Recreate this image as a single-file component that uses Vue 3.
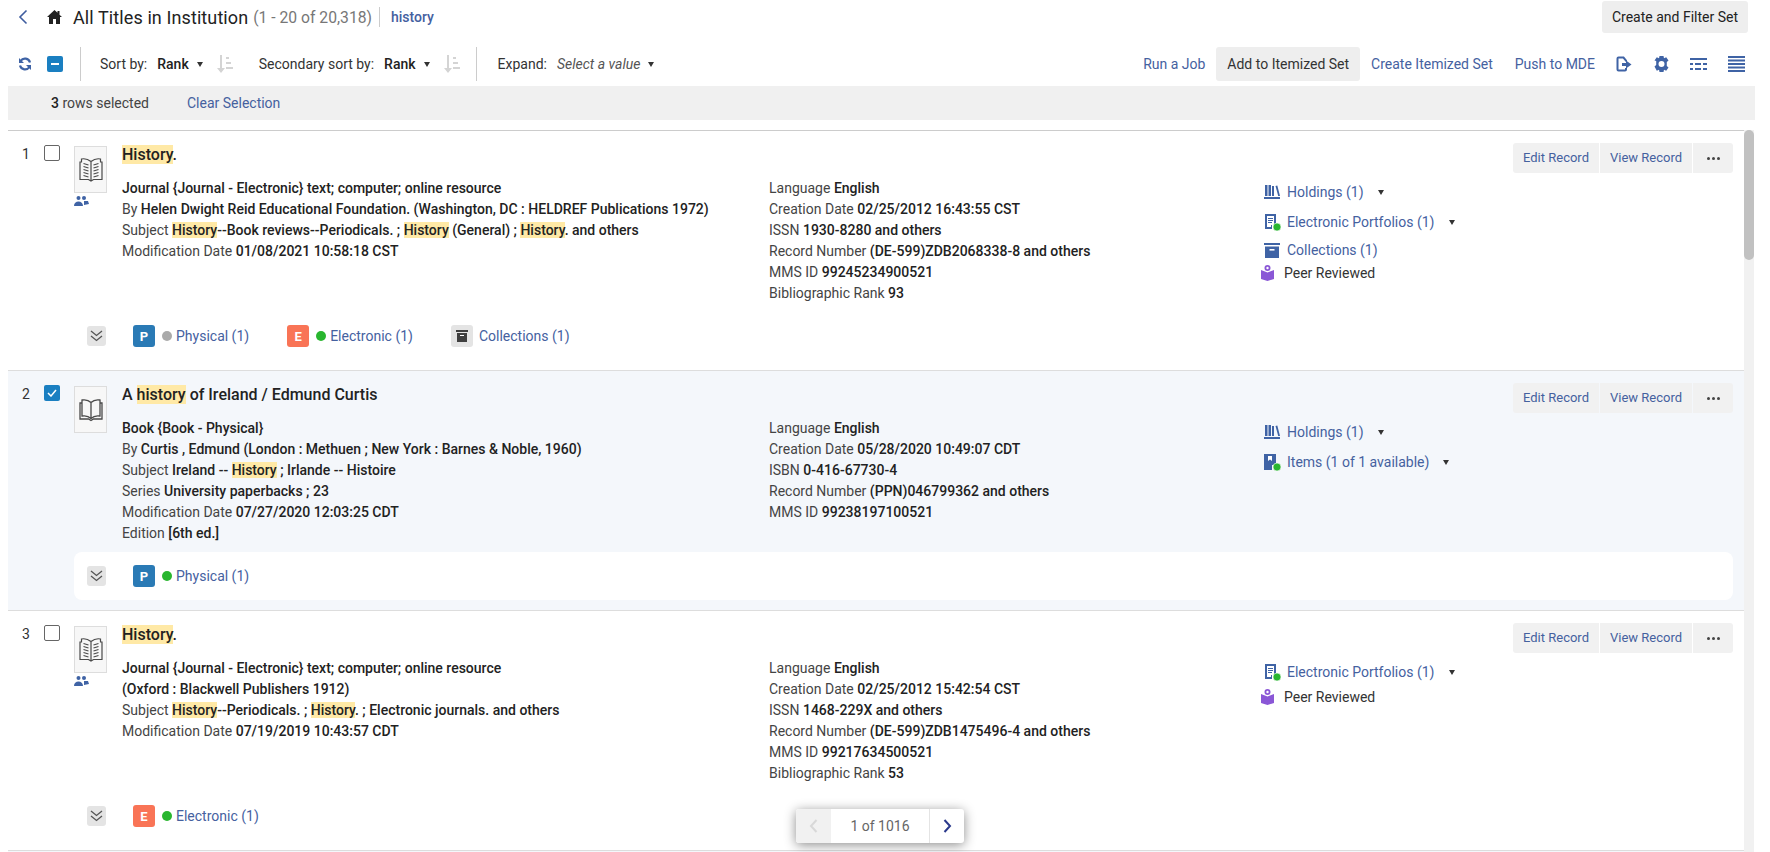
<template>
    <div class="page">
        <div class="top">
            <svg class="back" width="10" height="16" viewBox="0 0 10 16"><path d="M8.5 1.5 2 8l6.5 6.5" fill="none" stroke="#3f5d9f" stroke-width="1.6"/></svg>
            <svg class="home" width="15" height="14" viewBox="0 0 15 14"><path d="M7.5 0 0 7h2v7h4V9h3v5h4V7h2l-2.500-2.300V1h-2v1.800z" fill="#222"/></svg>
            <span class="page-title">All Titles in Institution</span>
            <span class="count">(1 - 20 of 20,318)</span>
            <span class="query">history</span>
            <button class="filter-btn">Create and Filter Set</button>
        </div>

        <div class="toolbar">
            <svg class="refresh" width="14" height="14" viewBox="0 0 14 14">
                <path d="M12 5.500A5.200 5.200 0 0 0 2.600 4M2 8.500A5.200 5.200 0 0 0 11.400 10" fill="none" stroke="#3f63a5" stroke-width="2.200"/>
                <path d="M1 1v5h5zM13 13V8H8z" fill="#3f63a5"/>
            </svg>
            <span class="select-all"><i></i></span>
            <span class="vsep first"></span>
            <span class="lbl">Sort by:</span>
            <b class="val">Rank</b>
            <i class="caret"></i>
            <svg class="sort" width="17" height="18" viewBox="0 0 17 18"><path d="M4 0h2v13h3l-4 5-4-5h3zM10 2h3v2h-3zM10 7h5v2h-5zM10 12h7v2h-7z" fill="#d4d4d4"/></svg>
            <span class="lbl second">Secondary sort by:</span>
            <b class="val">Rank</b>
            <i class="caret"></i>
            <svg class="sort" width="17" height="18" viewBox="0 0 17 18"><path d="M4 0h2v13h3l-4 5-4-5h3zM10 2h3v2h-3zM10 7h5v2h-5zM10 12h7v2h-7z" fill="#d4d4d4"/></svg>
            <span class="vsep"></span>
            <span class="lbl">Expand:</span>
            <em class="placeholder">Select a value</em>
            <i class="caret"></i>

            <div class="tools">
                <a class="tool">Run a Job</a>
                <a class="tool active">Add to Itemized Set</a>
                <a class="tool">Create Itemized Set</a>
                <a class="tool">Push to MDE</a>
                <svg class="tool-ic" width="17" height="16" viewBox="0 0 17 16">
                    <path d="M10 5.500V4.500L7.500 1.500H2.500c-.6 0-1 .4-1 1v11c0 .6.4 1 1 1H9c.6 0 1-.4 1-1v-1.500" fill="none" stroke="#3f63a5" stroke-width="2"/>
                    <path d="M6 7h4V4.500L15.500 8.500 10 12.500V10H6z" fill="#3f63a5"/>
                </svg>
                <svg class="tool-ic" width="15" height="16" viewBox="0 0 15 16"><path d="M5.500 0h4l.5 2.200 2.200-.9 2.300 3.200-1.700 1.600v3.800l1.700 1.600-2.300 3.200-2.200-.9-.5 2.200h-4l-.5-2.200-2.200.9L.5 10.500l1.700-1.600V5.100L.5 4.500 2.800 1.300 5 2.200zM7.500 5a3 3 0 1 0 0 6 3 3 0 0 0 0-6z" fill="#3f63a5"/></svg>
                <svg class="tool-ic" width="17" height="12" viewBox="0 0 17 12"><path d="M0 0h17v2H0zM0 5h3v2H0zM5 5h6v2H5zM13 5h4v2h-4zM0 10h3v2H0zM5 10h6v2H5zM13 10h4v2h-4z" fill="#3f63a5"/></svg>
                <svg class="tool-ic" width="17" height="16" viewBox="0 0 17 16"><path d="M0 0h17v2H0zM0 3.500h17v2H0zM0 7h17v2H0zM0 10.500h17v2H0zM0 14h17v2H0z" fill="#3f63a5"/></svg>
            </div>
        </div>

        <div class="selection">
            <span class="sel-count"><b>3</b> rows selected</span>
            <a class="clear">Clear Selection</a>
        </div>

        <div class="list">
            <div class="rows">
                <div class="row" v-for="rec in records" :key="rec.num" :class="{ selected: rec.checked }">
                    <span class="num">{{ rec.num }}</span>
                    <span class="check" :class="{ on: rec.checked }">
                        <svg v-if="rec.checked" width="10" height="8" viewBox="0 0 10 8"><path d="M1 4l3 3 5-6" fill="none" stroke="#fff" stroke-width="1.500"/></svg>
                    </span>

                    <div class="body">
                        <div class="body-top">
                            <div class="thumb-col">
                                <div class="thumb">
                                    <svg v-if="rec.type === 'journal'" width="24" height="26" viewBox="0 0 24 26" fill="none" stroke="#4a4a4a" stroke-width="1.200">
                                        <path d="M12 4.500C9.500 2.500 5 1.500 2.500 2v3H1v17.500h8.500L12 24l2.500-1.500H23V5h-1.500V2C19 1.500 14.500 2.500 12 4.500zM12 4.500V24"/>
                                        <path d="M4.500 6.500l5 1.500M4.500 9.500l5 1.500M4.500 12.500l5 1.500M4.500 15.500l5 1.500M4.500 18.500l5 1.500M14.500 8l5-1.500M14.500 11l5-1.500M14.500 14l5-1.500M14.500 17l5-1.500M14.500 20l5-1.500"/>
                                    </svg>
                                    <svg v-else width="24" height="24" viewBox="0 0 24 24" fill="none" stroke="#4a4a4a" stroke-width="1.300">
                                        <path d="M12 4.500C10 2.500 6 1.500 3 2v16c3-.5 7 .5 9 2.500 2-2 6-3 9-2.500V2C18 1.500 14 2.500 12 4.500zM12 4.500v16"/>
                                        <path d="M3 5H1v16h8.500l2.500 1.500 2.500-1.500H23V5h-2"/>
                                    </svg>
                                </div>
                                <svg v-if="rec.type === 'journal'" class="people" width="15" height="12" viewBox="0 0 15 12">
                                    <circle cx="4.500" cy="2" r="2" fill="#3f63a5"/><circle cx="10" cy="2" r="2" fill="#3f63a5"/>
                                    <path d="M0 10c0-3 2-4.500 4.500-4.500S9 7 9 10zM10 5h4l1 3-5 1z" fill="#3f63a5"/>
                                </svg>
                            </div>

                            <div class="main">
                                <div class="title-row">
                                    <div class="title">
                                        <template v-for="(p, i) in parts(rec.title)" :key="i"><mark v-if="p.hit">{{ p.text }}</mark><template v-else>{{ p.text }}</template></template>
                                    </div>
                                    <div class="actions">
                                        <a class="act">Edit Record</a>
                                        <a class="act">View Record</a>
                                        <a class="act more"><i></i><i></i><i></i></a>
                                    </div>
                                </div>

                                <div class="cols">
                                    <div class="col left">
                                        <div class="line" v-for="(l, i) in rec.left" :key="i">
                                            <span v-if="l[0]" class="key">{{ l[0] }}</span>
                                            <span class="value"><template v-for="(p, j) in parts(l[1])" :key="j"><mark v-if="p.hit">{{ p.text }}</mark><template v-else>{{ p.text }}</template></template></span>
                                        </div>
                                    </div>
                                    <div class="col mid">
                                        <div class="line" v-for="(l, i) in rec.mid" :key="i">
                                            <span class="key">{{ l[0] }}</span><span class="value">{{ l[1] }}</span>
                                        </div>
                                    </div>
                                    <div class="col right">
                                        <div class="res" v-for="(r, i) in rec.res" :key="i" :class="r.kind">
                                            <span class="res-ic">
                                                <svg v-if="r.kind === 'holdings'" width="16" height="14" viewBox="0 0 16 14"><path d="M1 0h2.500v11H1zM4.500 0H7v11H4.500zM8 1h2v10H8zM11.500 1l1.800-.6L16 11h-1.800zM0 12h16v2H0z" fill="#3f63a5"/></svg>
                                                <svg v-else-if="r.kind === 'portfolio'" width="18" height="18" viewBox="0 0 18 18"><path d="M2 1h11v11H9v4H2z" fill="#3f63a5"/><path d="M4 3h7v9H8v2H4z" fill="#fff"/><path d="M5 5h5v1H5zM5 7h5v1H5zM5 9h4v1H5z" fill="#3f63a5"/><circle cx="14" cy="14" r="4" fill="#29b62f" stroke="#fff" stroke-width=".6"/></svg>
                                                <svg v-else-if="r.kind === 'items'" width="18" height="18" viewBox="0 0 18 18"><path d="M1 1h12v11H9v5H1z" fill="#3f63a5"/><path d="M5 3h4v5L7 6.500 5 8z" fill="#fff"/><circle cx="14" cy="14" r="4" fill="#29b62f" stroke="#fff" stroke-width=".6"/></svg>
                                                <svg v-else-if="r.kind === 'collections'" width="16" height="15" viewBox="0 0 16 15"><path d="M0 0h16v2H0zM1 3.500h14V15H1z" fill="#3f63a5"/><path d="M5.500 6h5v1.600h-5z" fill="#fff"/></svg>
                                                <svg v-else width="13" height="16" viewBox="0 0 13 16"><circle cx="6.500" cy="3" r="3" fill="#8a57d6"/><circle cx="6.500" cy="3" r="1.200" fill="#fff"/><path d="M0 5l6.500 2.500L13 5v9l-6.500 2L0 14z" fill="#8a57d6"/></svg>
                                            </span>
                                            <a v-if="r.kind !== 'peer'" class="res-link">{{ r.text }}</a>
                                            <span v-else class="peer-text">{{ r.text }}</span>
                                            <i v-if="r.menu" class="caret"></i>
                                        </div>
                                    </div>
                                </div>
                            </div>
                        </div>

                        <div class="band">
                            <span class="expand">
                                <svg width="13" height="12" viewBox="0 0 13 12" fill="none" stroke="#555" stroke-width="1.300"><path d="M1 1l5.500 4.500L12 1M1 6l5.500 4.500L12 6"/></svg>
                            </span>
                            <div class="chip" v-for="(c, i) in rec.chips" :key="i">
                                <span class="badge" :class="c.kind">
                                    <template v-if="c.kind === 'p'">P</template>
                                    <template v-else-if="c.kind === 'e'">E</template>
                                    <svg v-else width="14" height="14" viewBox="0 0 14 14"><path d="M1 1h12v2H1zM2 4h10v9H2z" fill="#3f3f3f"/><path d="M5 6h4v1H5z" fill="#fff"/></svg>
                                </span>
                                <span v-if="c.dot" class="dot" :style="{ background: c.dot }"></span>
                                <a class="chip-link">{{ c.text }}</a>
                            </div>
                        </div>
                    </div>
                </div>
                <div class="row selected"></div>
            </div>
            <div class="scrollbar"><div class="thumb-bar"></div></div>
        </div>

        <div class="pager">
            <span class="pg prev"><svg width="9" height="14" viewBox="0 0 9 14"><path d="M7.500 1 2 7l5.500 6" fill="none" stroke="#d8d8d8" stroke-width="2"/></svg></span>
            <span class="pg-text">1 of 1016</span>
            <span class="pg next"><svg width="9" height="14" viewBox="0 0 9 14"><path d="M1.500 1 7 7l-5.500 6" fill="none" stroke="#2b3a8c" stroke-width="2"/></svg></span>
        </div>
    </div>
</template>

<script setup>
const parts = (text) => text.split(/(history)/i).filter(Boolean).map(t => ({
    text: t,
    hit: t.toLowerCase() === 'history'
}));

const records = [{
    num: 1,
    type: 'journal',
    checked: false,
    title: 'History.',
    left: [
        ['', 'Journal {Journal - Electronic} text; computer; online resource'],
        ['By', 'Helen Dwight Reid Educational Foundation. (Washington, DC : HELDREF Publications 1972)'],
        ['Subject', 'History--Book reviews--Periodicals. ; History (General) ; History. and others'],
        ['Modification Date', '01/08/2021 10:58:18 CST']
    ],
    mid: [
        ['Language', 'English'],
        ['Creation Date', '02/25/2012 16:43:55 CST'],
        ['ISSN', '1930-8280 and others'],
        ['Record Number', '(DE-599)ZDB2068338-8 and others'],
        ['MMS ID', '99245234900521'],
        ['Bibliographic Rank', '93']
    ],
    res: [
        { kind: 'holdings', text: 'Holdings (1)', menu: true },
        { kind: 'portfolio', text: 'Electronic Portfolios (1)', menu: true },
        { kind: 'collections', text: 'Collections (1)' },
        { kind: 'peer', text: 'Peer Reviewed' }
    ],
    chips: [
        { kind: 'p', dot: '#aaa', text: 'Physical (1)' },
        { kind: 'e', dot: '#29b62f', text: 'Electronic (1)' },
        { kind: 'c', text: 'Collections (1)' }
    ]
}, {
    num: 2,
    type: 'book',
    checked: true,
    title: 'A history of Ireland / Edmund Curtis',
    left: [
        ['', 'Book {Book - Physical}'],
        ['By', 'Curtis , Edmund (London : Methuen ; New York : Barnes & Noble, 1960)'],
        ['Subject', 'Ireland -- History ; Irlande -- Histoire'],
        ['Series', 'University paperbacks ; 23'],
        ['Modification Date', '07/27/2020 12:03:25 CDT'],
        ['Edition', '[6th ed.]']
    ],
    mid: [
        ['Language', 'English'],
        ['Creation Date', '05/28/2020 10:49:07 CDT'],
        ['ISBN', '0-416-67730-4'],
        ['Record Number', '(PPN)046799362 and others'],
        ['MMS ID', '99238197100521']
    ],
    res: [
        { kind: 'holdings', text: 'Holdings (1)', menu: true },
        { kind: 'items', text: 'Items (1 of 1 available)', menu: true }
    ],
    chips: [
        { kind: 'p', dot: '#29b62f', text: 'Physical (1)' }
    ]
}, {
    num: 3,
    type: 'journal',
    checked: false,
    title: 'History.',
    left: [
        ['', 'Journal {Journal - Electronic} text; computer; online resource'],
        ['', '(Oxford : Blackwell Publishers 1912)'],
        ['Subject', 'History--Periodicals. ; History. ; Electronic journals. and others'],
        ['Modification Date', '07/19/2019 10:43:57 CDT']
    ],
    mid: [
        ['Language', 'English'],
        ['Creation Date', '02/25/2012 15:42:54 CST'],
        ['ISSN', '1468-229X and others'],
        ['Record Number', '(DE-599)ZDB1475496-4 and others'],
        ['MMS ID', '99217634500521'],
        ['Bibliographic Rank', '53']
    ],
    res: [
        { kind: 'portfolio', text: 'Electronic Portfolios (1)', menu: true },
        { kind: 'peer', text: 'Peer Reviewed' }
    ],
    chips: [
        { kind: 'e', dot: '#29b62f', text: 'Electronic (1)' }
    ]
}];
</script>

<style>
html, body {
    margin: 0;
    background: #fff;
    overflow: hidden;
}
</style>

<style scoped>
.page {
    position: relative;
    width: 1770px;
    height: 852px;
    overflow: hidden;
    background: #fff;
    font-family: Roboto, "Liberation Sans", sans-serif;
    font-size: 14px;
    color: #333;
}

a {
    color: #45619f;
}

/* top title bar */
.top {
    display: flex;
    align-items: center;
    height: 32px;
    margin-top: 1px;
    padding: 0 22px 0 18px;
}

.home {
    margin-left: 19px;
}

.page-title {
    margin-left: 11px;
    font-size: 18px;
    letter-spacing: .1px;
    color: #222;
}

.count {
    margin-left: 5px;
    font-size: 15.700px;
    color: #777;
}

.query {
    margin-left: 7px;
    padding-left: 11px;
    line-height: 20px;
    border-left: 1px solid #ccc;
    color: #45619f;
    font-weight: 500;
}

.filter-btn {
    margin-left: auto;
    height: 32px;
    width: 146px;
    padding: 0;
    border: 0;
    border-radius: 3px;
    background: #eee;
    color: #222;
    font: 14px Roboto, sans-serif;
}

/* toolbar */
.toolbar {
    display: flex;
    align-items: center;
    height: 34px;
    margin-top: 14px;
    padding: 0 25px 0 18px;
}

.select-all {
    display: flex;
    align-items: center;
    justify-content: center;
    width: 16px;
    height: 16px;
    margin-left: 15px;
    border-radius: 2px;
    background: #1a7fc1;
}

.select-all i {
    width: 8px;
    height: 2px;
    background: #fff;
}

.vsep {
    width: 1px;
    height: 34px;
    margin: 0 21px 0 16px;
    background: #ccc;
}

.vsep.first {
    margin: 0 19px 0 17px;
}

.lbl {
    color: #333;
}

.lbl.second {
    margin-left: 26px;
}

.val {
    margin-left: 10px;
    font-weight: 500;
    color: #222;
}

.placeholder {
    margin-left: 10px;
    color: #555;
}

.caret {
    display: inline-block;
    width: 0;
    height: 0;
    margin-left: 8px;
    border-left: 3.500px solid transparent;
    border-right: 3.500px solid transparent;
    border-top: 5px solid #333;
}

.sort {
    margin-left: 13px;
}

.tools {
    display: flex;
    align-items: center;
    margin-left: auto;
    height: 34px;
}

.tool {
    display: flex;
    align-items: center;
    height: 34px;
    padding: 0 11px;
    border-radius: 3px;
}

.tool.active {
    background: #eee;
    color: #333;
}

.tool-ic {
    margin-left: 21px;
}

.tool-ic:first-of-type {
    margin-left: 10px;
}

/* selection bar */
.selection {
    display: flex;
    align-items: center;
    height: 34px;
    margin: 5px 15px 0 8px;
    padding-left: 43px;
    background: #f0f0f0;
}

.sel-count {
    color: #444;
}

.sel-count b {
    font-weight: 500;
    color: #222;
}

.clear {
    margin-left: 38px;
}

/* result rows */
.list {
    display: flex;
    height: 722px;
    margin-top: 10px;
    margin-left: 8px;
}

.rows {
    width: 1736px;
}

.row {
    display: flex;
    box-sizing: border-box;
    height: 240px;
    padding: 12px 11px 10px 14px;
    border-top: 1px solid #ddd;
}

.row:first-child {
    border-top-color: #ccc;
}

.row.selected {
    background: #f4f7fb;
}

.num {
    width: 22px;
    margin-top: 3px;
    line-height: 16px;
    color: #333;
}

.check {
    display: flex;
    align-items: center;
    justify-content: center;
    box-sizing: border-box;
    width: 16px;
    height: 16px;
    margin-top: 2px;
    margin-right: 14px;
    border: 1px solid #666;
    border-radius: 2px;
    background: #fff;
}

.check.on {
    border: 0;
    background: #1a7fc1;
}

.body {
    display: flex;
    flex-direction: column;
    flex: 1;
}

.body-top {
    display: flex;
    height: 160px;
}

.thumb-col {
    display: flex;
    flex-direction: column;
    width: 33px;
    margin-right: 15px;
    margin-top: 3px;
}

.thumb {
    display: flex;
    align-items: center;
    justify-content: center;
    box-sizing: border-box;
    width: 33px;
    height: 47px;
    border: 1px solid #ddd;
    background: #f7f7f7;
}

.people {
    margin-top: 3px;
}

.main {
    flex: 1;
}

.title-row {
    display: flex;
    justify-content: space-between;
    height: 30px;
}

.title {
    margin-top: 2px;
    font-size: 16px;
    line-height: 20px;
    font-weight: 500;
    color: #222;
}

mark {
    background: #ffe9a6;
    color: inherit;
    font-weight: 500;
}

.actions {
    display: flex;
    gap: 1px;
}

.act {
    display: flex;
    align-items: center;
    justify-content: center;
    box-sizing: border-box;
    height: 30px;
    width: 86px;
    padding-bottom: 1px;
    background: #f1f1f1;
    font-size: 13px;
}

.act:first-child {
    border-radius: 3px 0 0 3px;
}

.act:nth-child(2) {
    width: 92px;
}

.act.more {
    width: 40px;
    gap: 2px;
    padding-bottom: 0;
    border-radius: 0 3px 3px 0;
}

.more i {
    width: 3px;
    height: 3px;
    border-radius: 50%;
    background: #444;
}

.cols {
    display: flex;
    margin-top: 5px;
}

.col.left {
    width: 647px;
}

.col.mid {
    width: 494px;
}

.col.right {
    margin-top: -1px;
}

.line {
    height: 21px;
    line-height: 21px;
    white-space: nowrap;
}

.key {
    margin-right: 3.500px;
    color: #444;
}

.value {
    color: #222;
    font-weight: 500;
}

.res {
    display: flex;
    align-items: center;
    height: 30px;
}

.res.collections {
    height: 26px;
}

.res.peer {
    height: 20px;
}

.res-ic {
    display: flex;
    justify-content: center;
    width: 18px;
    margin-right: 6px;
}

.res.peer .res-ic {
    width: 13px;
    margin-left: -2px;
    margin-right: 10px;
}

.res .caret {
    margin-left: 14px;
}

.peer-text {
    color: #333;
}

/* availability band */
.band {
    display: flex;
    align-items: center;
    height: 48px;
    margin-top: 9px;
    padding-left: 13px;
    border-radius: 8px;
}

.row.selected .band {
    background: #fff;
}

.expand {
    display: flex;
    align-items: center;
    justify-content: center;
    width: 19px;
    height: 20px;
    margin-right: 8px;
    border-radius: 3px;
    background: #e4e4e4;
}

.chip {
    display: flex;
    align-items: center;
    margin-left: 19px;
    margin-right: 19px;
}

.badge {
    display: flex;
    align-items: center;
    justify-content: center;
    width: 22px;
    height: 22px;
    margin-right: 7px;
    border-radius: 3px;
    color: #fff;
    font-size: 13px;
    font-weight: 700;
}

.badge.p {
    background: #2a7ab5;
}

.badge.e {
    background: #f97456;
}

.badge.c {
    margin-right: 6px;
    background: #e4e4e4;
}

.dot {
    width: 10px;
    height: 10px;
    margin-right: 4px;
    border-radius: 50%;
}

/* scrollbar */
.scrollbar {
    width: 10px;
    background: #f1f1f1;
}

.thumb-bar {
    height: 130px;
    border-radius: 5px;
    background: #c1c1c1;
}

/* floating pager */
.pager {
    position: absolute;
    left: 796px;
    top: 809px;
    display: flex;
    align-items: center;
    width: 168px;
    height: 34px;
    border-radius: 3px;
    background: #fff;
    box-shadow: 0 2px 12px rgba(0, 0, 0, .45);
    overflow: hidden;
}

.pg {
    display: flex;
    align-items: center;
    justify-content: center;
    height: 34px;
}

.pg.prev {
    width: 35px;
    background: #f1f1f1;
}

.pg-text {
    flex: 1;
    text-align: center;
    color: #666;
}

.pg.next {
    width: 34px;
    border-left: 1px solid #e4e4e4;
}
</style>
